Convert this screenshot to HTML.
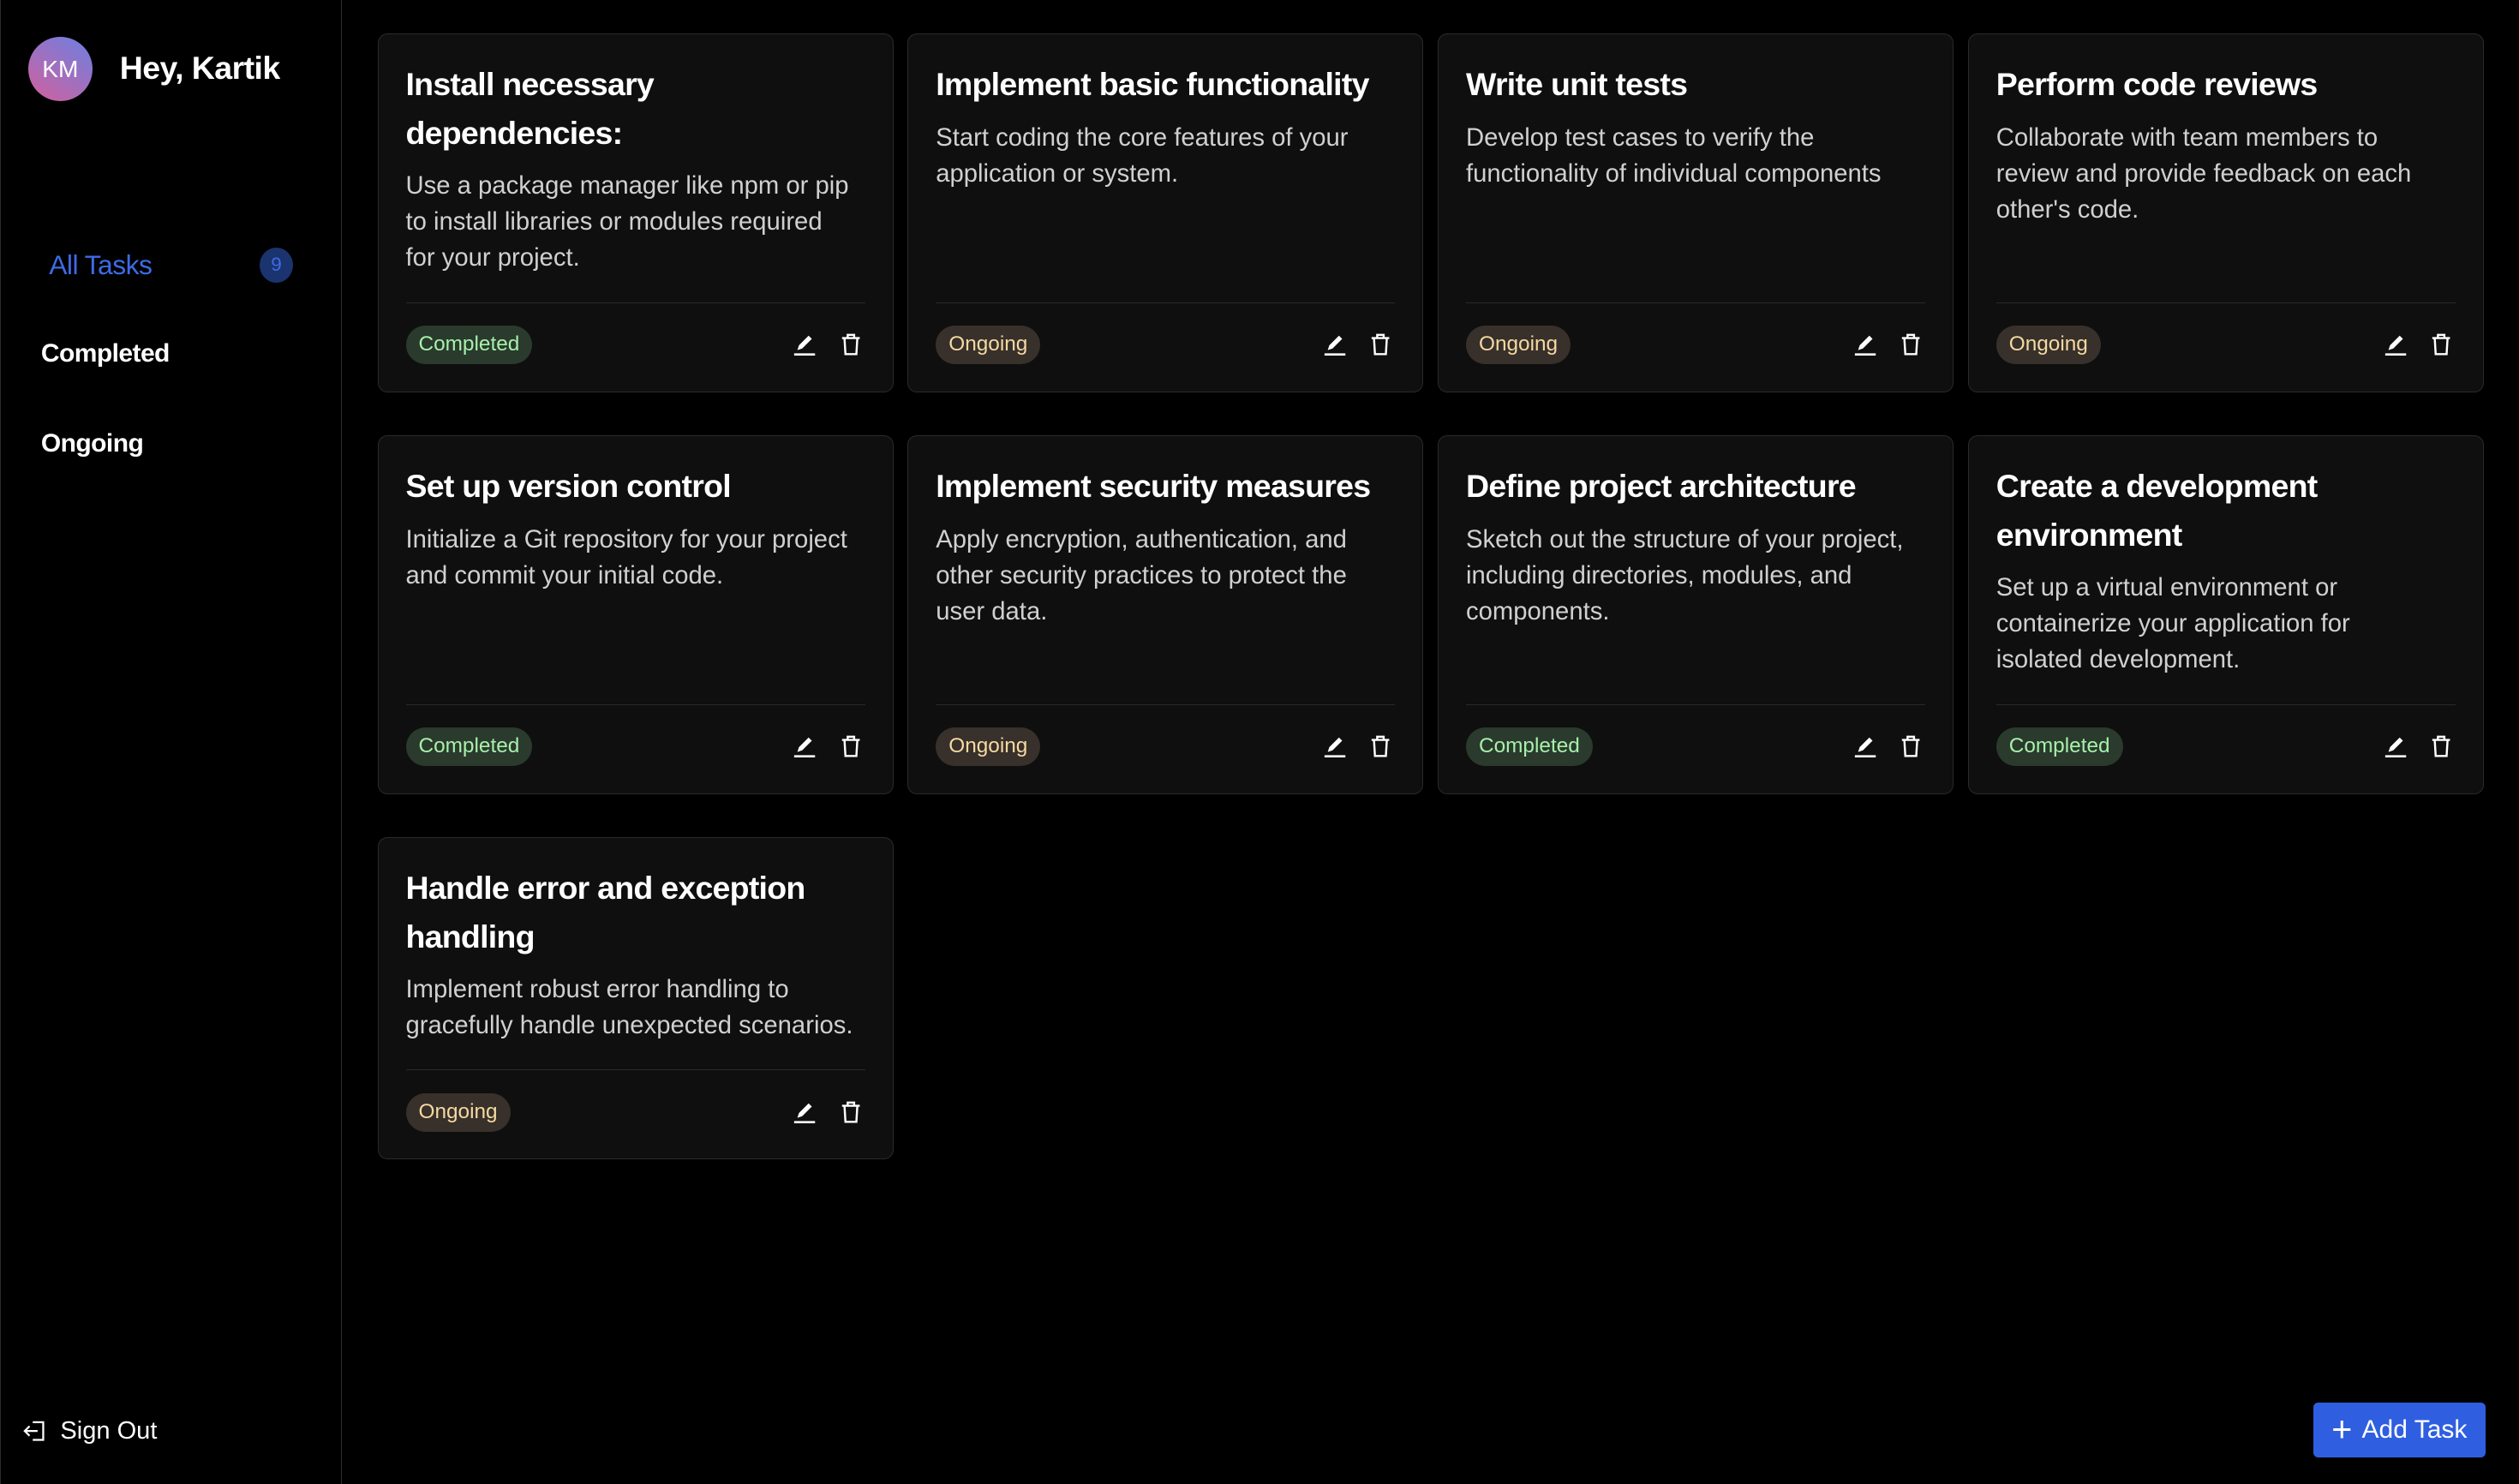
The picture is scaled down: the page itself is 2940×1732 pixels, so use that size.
<!DOCTYPE html>
<html><head><meta charset="utf-8"><style>
*{box-sizing:border-box;margin:0;padding:0}
html,body{background:#000;width:2940px;height:1732px;overflow:hidden}
#r{zoom:1.875;width:1568px;height:924px;position:relative;font-family:"Liberation Sans",sans-serif;color:#fff}
.side{position:absolute;left:0;top:0;width:213px;height:924px;border-right:1px solid #2c2c2c;border-left:1px solid #2c2c2c}
.av{position:absolute;left:17px;top:23px;width:40px;height:40px;border-radius:50%;background:linear-gradient(35deg,#d3609c,#6b80e3);font-size:15px;display:flex;align-items:center;justify-content:center}
.hey{position:absolute;left:74px;top:31px;font-size:20px;font-weight:600;letter-spacing:-0.3px}
.nav{position:absolute;font-size:16px;font-weight:600;letter-spacing:-0.3px}
.cnt{position:absolute;left:161px;top:154px;width:21px;height:22px;border-radius:50%;background:#1b336e;color:#3d6be6;font-size:12px;display:flex;align-items:center;justify-content:center}
.so{position:absolute;left:14px;top:882px;font-size:15.5px;display:flex;align-items:center;gap:9px}
.grid{position:absolute;left:235px;top:21px;width:1312px;display:grid;grid-template-columns:repeat(4,321px);gap:27px 9px}
.c{background:#0f0f0f;border:1px solid #2a2a2a;border-radius:6px;padding:16px 17px 17px;display:flex;flex-direction:column;box-shadow:0 4px 10px rgba(0,0,0,.6)}
.t{font-size:20px;font-weight:600;line-height:30px;letter-spacing:-0.4px;white-space:nowrap}
.d{font-size:15.6px;line-height:22.5px;color:#d0d0d0;margin-top:7px;flex:1;padding-bottom:16px;white-space:nowrap}
.f{border-top:1px solid #2a2a2a;padding-top:14px;display:flex;align-items:center;justify-content:space-between}
.b{font-size:13px;padding:4px 8px;border-radius:12px;line-height:16px}
.cp{background:#2a3a2d;color:#a8f0aa}.og{background:#38302a;color:#f4d9a2}
.ic{display:flex;gap:14px;padding-right:2px}
.add{position:absolute;left:1440px;top:873px;width:107px;height:34px;background:#2f5fe0;border-radius:3px;font-size:16px;display:flex;align-items:center;justify-content:center;gap:6px}
</style></head><body><div id="r">
<div class="side">
<div class="av">KM</div><div class="hey">Hey, Kartik</div>
<div class="nav" style="left:30px;top:155px;color:#3d6be6;font-weight:400;font-size:17px">All Tasks</div>
<div class="cnt">9</div>
<div class="nav" style="left:25px;top:211px">Completed</div>
<div class="nav" style="left:25px;top:267px">Ongoing</div>
<div class="so"><svg width="14" height="14" viewBox="0 0 14 14" fill="none" stroke="#fff" stroke-width="1.2"><path d="M6 1.5H12.5V12.5H6M1 7H9M4 4L1 7L4 10"/></svg>Sign Out</div>
</div>
<div class="grid" id="g"></div>
<div class="add"><span style="font-size:22px;font-weight:300;line-height:1">+</span>Add Task</div>
</div>
<script>
var P='<svg width="15" height="15" viewBox="0 0 15 15"><path d="M3 11L4 8L10 2L12 4L6 10Z" fill="#fff"/><rect x="1" y="13" width="13" height="1.4" fill="#fff"/></svg>';
var T='<svg width="14" height="15" viewBox="0 0 14 15" fill="none" stroke="#fff" stroke-width="1.3"><path d="M1.5 3.5H12.5M5 3.5V1.5H9V3.5M3 3.5L3.6 13.5H10.4L11 3.5"/></svg>';
var d=[["Install necessary<br>dependencies:","Use a package manager like npm or pip<br>to install libraries or modules required<br>for your project.",1],
["Implement basic functionality","Start coding the core features of your<br>application or system.",0],
["Write unit tests","Develop test cases to verify the<br>functionality of individual components",0],
["Perform code reviews","Collaborate with team members to<br>review and provide feedback on each<br>other's code.",0],
["Set up version control","Initialize a Git repository for your project<br>and commit your initial code.",1],
["Implement security measures","Apply encryption, authentication, and<br>other security practices to protect the<br>user data.",0],
["Define project architecture","Sketch out the structure of your project,<br>including directories, modules, and<br>components.",1],
["Create a development<br>environment","Set up a virtual environment or<br>containerize your application for<br>isolated development.",1],
["Handle error and exception<br>handling","Implement robust error handling to<br>gracefully handle unexpected scenarios.",0]];
var h='';d.forEach(function(x){h+='<div class="c"><div class="t">'+x[0]+'</div><div class="d">'+x[1]+'</div><div class="f"><span class="b '+(x[2]?'cp">Completed':'og">Ongoing')+'</span><div class="ic">'+P+T+'</div></div></div>'});
document.getElementById('g').innerHTML=h;
</script></body></html>
